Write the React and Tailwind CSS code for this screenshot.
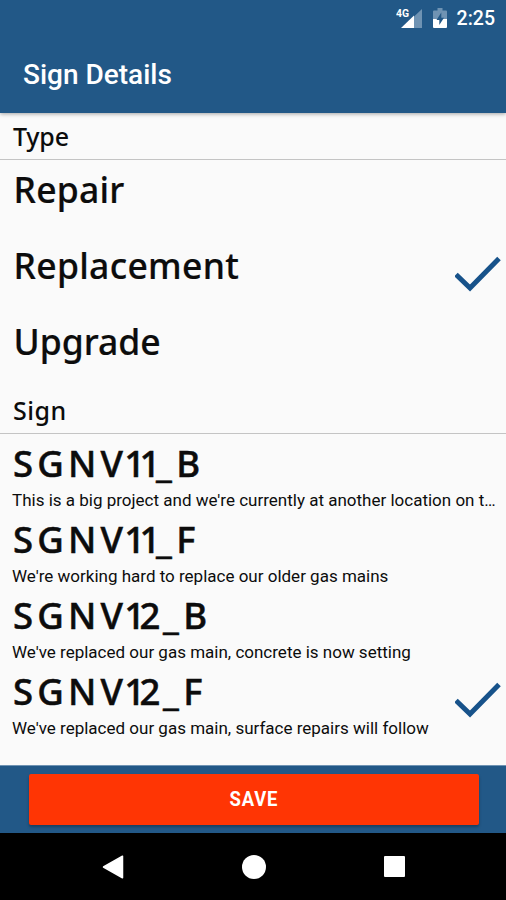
import React, { useState } from 'react';

const types = [
  { name: 'Repair', spacing: 'tracking-[0.2px]' },
  { name: 'Replacement', spacing: 'tracking-[0.3px]' },
  { name: 'Upgrade', spacing: 'tracking-[0px]' },
];

const signs = [
  {
    name: 'SGNV11_B',
    text: "This is a big project and we're currently at another location on t…",
  },
  {
    name: 'SGNV11_F',
    text: "We're working hard to replace our older gas mains",
  },
  {
    name: 'SGNV12_B',
    text: "We've replaced our gas main, concrete is now setting",
  },
  {
    name: 'SGNV12_F',
    text: "We've replaced our gas main, surface repairs will follow",
  },
];

function StatusBar() {
  return (
    <div className="flex h-9 items-center justify-end pr-[11px] text-white">
      <svg width="26" height="22" viewBox="0 0 26 22" className="mr-[11px]">
        <path d="M18 9.5 26 2v19h-8z" fill="#6f93b3" />
        <path d="M5 21 18 8.5V21z" fill="#fff" />
        <text x="0" y="10" fontSize="11" fontWeight="700" fontFamily="Roboto, sans-serif" fill="#fff" textLength="13" lengthAdjust="spacingAndGlyphs">
          4G
        </text>
      </svg>
      <svg width="14" height="20" viewBox="0 0 14 20" className="mr-[10px]">
        <path d="M1 2.5h3.5V0h5v2.5H13a1 1 0 0 1 1 1V11H0V3.500a1 1 0 0 1 1-1z" fill="#6f93b3" />
        <path d="M0 11h14v8a1 1 0 0 1-1 1H1a1 1 0 0 1-1-1z" fill="#fff" />
        <path d="M8.300 4.500 3.500 12h2.800v5L11 9.800H8.300z" fill="#225887" />
      </svg>
      <span className="mt-0.5 text-[19.5px] font-medium leading-none">2:25</span>
    </div>
  );
}

function Check() {
  return (
    <svg width="46" height="36" viewBox="0 0 46 36" className="shrink-0">
      <path d="M1 18.500 15 32 44 2.500" fill="none" stroke="#17528a" strokeWidth="5" />
    </svg>
  );
}

function SectionHeader({ children, className }) {
  return (
    <h2 className={`border-b border-[#c4c4c4] pl-[13px] font-['Noto_Sans',sans-serif] text-[25px] font-medium ${className}`}>
      {children}
    </h2>
  );
}

function SignCode({ code }) {
  const second = code[5];
  return (
    <>
      <span className="tracking-[4.2px]">{code.slice(0, 3)}</span>
      <span className="tracking-[1.2px]">{code[3]}</span>
      <span className="tracking-[-5.5px]">{code[4]}</span>
      <span className={second === '1' ? 'tracking-[-4.5px]' : 'tracking-[2.5px]'}>{second}</span>
      <span className="tracking-[4.5px]">{code[6]}</span>
      <span>{code[7]}</span>
    </>
  );
}

function TypeRow({ item, selected, onClick }) {
  return (
    <div onClick={onClick} className="flex h-[76px] items-center justify-between pl-[13.5px] pr-[5px]">
      <div className={`h-full pt-[9px] font-['Noto_Sans',sans-serif] text-[35.5px] font-medium leading-10 [-webkit-text-stroke:0.2px] ${item.spacing}`}>
        {item.name}
      </div>
      {selected && <Check />}
    </div>
  );
}

function SignRow({ item, selected, onClick }) {
  return (
    <div onClick={onClick} className="flex h-[76px] items-center justify-between pl-3 pr-[5px]">
      <div className="h-full min-w-0 flex-1">
        <div className="pl-px pt-[9px] font-['Noto_Sans',sans-serif] text-[36.5px] font-medium leading-10 [-webkit-text-stroke:0.5px]">
          <SignCode code={item.name} />
        </div>
        <div className="mt-1.5 whitespace-nowrap text-[17px] leading-[22px]">{item.text}</div>
      </div>
      {selected && <Check />}
    </div>
  );
}

export default function App() {
  const [type, setType] = useState('Replacement');
  const [sign, setSign] = useState('SGNV12_F');

  return (
    <div className="flex h-[900px] w-[506px] flex-col overflow-hidden bg-[#fafafa] font-[Roboto,sans-serif] text-[#0c0c0c]">
      <header className="h-[113px] shrink-0 bg-[#225887] shadow-[0_1px_4px_rgba(0,0,0,0.35)]">
        <StatusBar />
        <h1 className="pl-[23px] pt-[23px] text-[28px] font-medium leading-8 text-white">Sign Details</h1>
      </header>

      <main className="h-[652px] shrink-0">
        <SectionHeader className="h-[47px] leading-[46px] tracking-[-0.2px]">Type</SectionHeader>
        {types.map((t) => (
          <TypeRow key={t.name} item={t} selected={t.name === type} onClick={() => setType(t.name)} />
        ))}
        <SectionHeader className="h-[46px] leading-[45px] tracking-[0.5px]">Sign</SectionHeader>
        {signs.map((s) => (
          <SignRow key={s.name} item={s} selected={s.name === sign} onClick={() => setSign(s.name)} />
        ))}
      </main>

      <div className="h-[68px] shrink-0 border-t border-[#6f93b3] bg-[#225887] pl-[28.5px] pt-2">
        <button className="h-[51px] w-[450px] rounded-[2px] bg-[#ff3504] text-white shadow-[0_2px_3px_rgba(0,0,0,0.3)]">
          <span className="inline-block scale-x-90 pl-0.5 text-[20.5px] font-bold tracking-[0.9px]">SAVE</span>
        </button>
      </div>

      {/* Android navigation */}
      <nav className="flex flex-1 items-center bg-black pl-[102px]">
        <svg width="22" height="24" viewBox="0 0 22 24">
          <path d="M20.500 1.200v21.600L1.500 12z" fill="#fff" stroke="#fff" strokeWidth="1.500" strokeLinejoin="round" />
        </svg>
        <div className="ml-[117.5px] size-6 rounded-full bg-white" />
        <div className="ml-[118px] size-[21px] rounded-[1px] bg-white" />
      </nav>
    </div>
  );
}
